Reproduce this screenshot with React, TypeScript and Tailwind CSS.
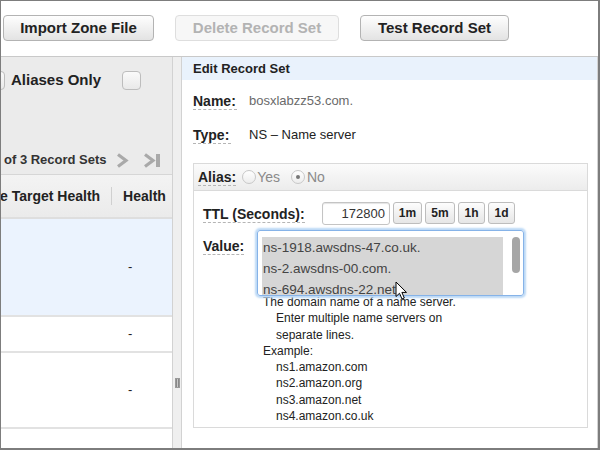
import React from 'react';

const Label = ({ children, className = '' }: { children: React.ReactNode; className?: string }) => (
  <span
    className={`border-b border-dashed border-[#b5b5b5] text-[14px] leading-[16px] font-bold text-[#222] ${className}`}
  >
    {children}
  </span>
);

const ToolButton = ({ label, width, disabled }: { label: string; width: string; disabled?: boolean }) => (
  <button
    className={`h-[26px] ${width} rounded-[4px] border text-[15px] font-bold ${
      disabled
        ? 'border-[#dedede] bg-[#f7f7f7] text-[#b3b3b3]'
        : 'border-[#b3b3b3] bg-linear-to-b from-[#fefefe] to-[#e3e3e3] text-[#222]'
    }`}
  >
    {label}
  </button>
);

const SmallButton = ({ label, width }: { label: string; width: string }) => (
  <button
    className={`h-[22px] ${width} rounded-[3px] border border-[#bdbdbd] bg-linear-to-b from-[#fdfdfd] to-[#e6e6e6] text-[12px] font-bold text-[#222]`}
  >
    {label}
  </button>
);

const Radio = ({ checked }: { checked?: boolean }) => (
  <span className="flex h-[14px] w-[14px] items-center justify-center rounded-full border border-[#c8c8c8] bg-linear-to-b from-[#ffffff] to-[#ededed]">
    {checked && <span className="h-[4px] w-[4px] rounded-full bg-[#777]" />}
  </span>
);

const Checkbox = ({ className = '' }: { className?: string }) => (
  <span
    className={`block h-[19px] w-[19px] rounded-[4px] border border-[#bdbdbd] bg-linear-to-b from-[#fafafa] to-[#e9e9e9] ${className}`}
  />
);

export default function App() {
  const examples = ['ns1.amazon.com', 'ns2.amazon.org', 'ns3.amazon.net', 'ns4.amazon.co.uk'];
  const values = ['ns-1918.awsdns-47.co.uk.', 'ns-2.awsdns-00.com.', 'ns-694.awsdns-22.net'];

  return (
    <div className="flex h-[450px] w-[600px] flex-col overflow-hidden border-t border-l border-r-2 border-b-2 border-[#7d7d7d] bg-white font-['Liberation_Sans',Arial,sans-serif]">
      {/* toolbar */}
      <div className="flex h-[56px] shrink-0 gap-[21px] border-b border-[#c9c9c9] pt-[14px] pl-[2px]">
        <ToolButton label="Import Zone File" width="w-[151px]" />
        <ToolButton label="Delete Record Set" width="w-[164px]" disabled />
        <ToolButton label="Test Record Set" width="w-[149px]" />
      </div>

      <div className="flex min-h-0 flex-1">
        {/* left list panel */}
        <div className="flex w-[171px] shrink-0 flex-col overflow-hidden">
          <div className="h-[118px] shrink-0 border-b border-[#d6d6d6] bg-[#ebebeb]">
            <div className="mt-[14px] flex h-[19px] items-center">
              <Checkbox className="ml-[-15px]" />
              <span className="ml-[6px] text-[15px] font-bold text-[#222]">Aliases Only</span>
              <Checkbox className="ml-[21px]" />
            </div>
            <div className="mt-[60px] flex h-[20px] items-center">
              <span className="ml-[3px] text-[13px] font-bold whitespace-nowrap text-[#333]">of 3 Record Sets</span>
              <svg className="ml-[9px]" width="13" height="15" viewBox="0 0 13 15">
                <path d="M2 1.5 L10 7.5 L2 13.5" fill="none" stroke="#a9a9a9" strokeWidth="3.2" />
              </svg>
              <svg className="ml-[14px]" width="18" height="15" viewBox="0 0 18 15">
                <path d="M2 1.5 L10 7.5 L2 13.5" fill="none" stroke="#a9a9a9" strokeWidth="3.2" />
                <rect x="13" y="1" width="4" height="13" fill="#a9a9a9" />
              </svg>
            </div>
          </div>
          <div className="flex h-[44px] shrink-0 items-center border-b-2 border-[#dedede] bg-linear-to-b from-[#f3f3f3] to-[#ebebeb] text-[14px] font-bold text-[#222]">
            <span className="ml-[-1px] whitespace-nowrap">e Target Health</span>
            <span className="ml-[11px] h-[18px] w-px bg-[#d0d0d0]" />
            <span className="ml-[11px] whitespace-nowrap">Health</span>
          </div>
          <div className="flex h-[98px] shrink-0 items-center border-b-2 border-[#e2e2e2] bg-[#ebf3fe] pl-[127px] text-[13px] text-[#222]">
            -
          </div>
          <div className="flex h-[36px] shrink-0 items-center border-b-2 border-[#e2e2e2] pl-[127px] text-[13px] text-[#222]">
            -
          </div>
          <div className="flex h-[76px] shrink-0 items-center border-b-2 border-[#e2e2e2] pl-[127px] text-[13px] text-[#222]">
            -
          </div>
          <div className="flex-1" />
        </div>

        {/* splitter */}
        <div className="flex w-[10px] shrink-0 flex-col items-center border-x border-[#d2d2d2] bg-[#efefef] pt-[321px]">
          <div className="flex h-[10px] w-[5px] gap-px border border-[#9a9a9a] bg-[#c8c8c8]">
            <span className="w-px bg-[#888]" />
            <span className="w-px bg-[#888]" />
          </div>
        </div>

        {/* right edit panel */}
        <div className="flex min-w-0 flex-1 flex-col border-r border-[#d4d4d4]">
          <div className="flex h-[23px] shrink-0 items-center bg-[#e9f2fc] pl-[11px] text-[13px] font-bold text-[#222]">
            Edit Record Set
          </div>
          <div className="mt-[10px] flex h-[22px] items-center pl-[11px]">
            <Label className="w-[44px]">Name:</Label>
            <span className="ml-[12px] text-[13px] text-[#6a6a6a]">bosxlabzz53.com.</span>
          </div>
          <div className="mt-[12px] flex h-[22px] items-center pl-[11px]">
            <Label className="w-[38px]">Type:</Label>
            <span className="ml-[18px] text-[13px] text-[#222]">NS – Name server</span>
          </div>

          <div className="mt-[17px] ml-[11px] w-[395px] border border-[#dadada]">
            <div className="flex h-[27px] items-center border-b border-[#dadada] bg-linear-to-b from-[#fbfbfb] to-[#ececec] pl-[4px] text-[14px]">
              <Label>Alias:</Label>
              <span className="ml-[6px]">
                <Radio />
              </span>
              <span className="ml-[1px] text-[#8a8a8a]">Yes</span>
              <span className="ml-[11px]">
                <Radio checked />
              </span>
              <span className="ml-[2px] text-[#8a8a8a]">No</span>
            </div>

            <div className="pt-[10px] pb-[3px] pl-[9px]">
              <div className="flex h-[25px] items-center">
                <span className="w-[119px]">
                  <Label>TTL (Seconds):</Label>
                </span>
                <div className="flex h-[23px] w-[68px] items-center justify-end rounded-[3px] border border-[#c4c4c4] pr-[4px] text-[13px] text-[#333] shadow-[inset_0_1px_1px_#e4e4e4]">
                  172800
                </div>
                <div className="mb-[2px] ml-[3px] flex gap-[3px]">
                  <SmallButton label="1m" width="w-[29px]" />
                  <SmallButton label="5m" width="w-[30px]" />
                  <SmallButton label="1h" width="w-[27px]" />
                  <SmallButton label="1d" width="w-[27px]" />
                </div>
              </div>

              <div className="mt-[4px] flex">
                <span className="w-[54px] pt-[4px]">
                  <Label>Value:</Label>
                </span>
                <div className="relative h-[66px] w-[267px] rounded-[3px] border border-[#86b3e8] shadow-[0_0_2px_2px_#bcd9f6]">
                  <div className="flex h-full overflow-hidden pt-[6px] pl-[4px]">
                    <div className="h-[64px] w-[241px] shrink-0 bg-[#d6d6d6] text-[13.5px] leading-[21px] whitespace-nowrap text-[#444]">
                      {values.map((v) => (
                        <div key={v} className="pl-[1px]">
                          {v}
                        </div>
                      ))}
                    </div>
                    <div className="flex flex-1 justify-center pl-[6px]">
                      <span className="h-[36px] w-[8px] rounded-full bg-[#a6a6a6]" />
                    </div>
                  </div>
                  <svg className="absolute top-[50px] left-[137px]" width="13" height="19" viewBox="0 0 13 19">
                    <path
                      d="M1 1 L1 15.5 L4.5 12.3 L7 18 L9.3 17 L6.9 11.4 L11.5 11.4 Z"
                      fill="#fff"
                      stroke="#000"
                      strokeWidth="1"
                      strokeLinejoin="round"
                    />
                  </svg>
                </div>
              </div>

              <div className="mt-[-2px] ml-[60px] text-[12px] leading-[16.3px] text-[#222]">
                <div>The domain name of a name server.</div>
                <div className="pl-[13px]">Enter multiple name servers on</div>
                <div className="pl-[13px]">separate lines.</div>
                <div>Example:</div>
                {examples.map((e) => (
                  <div key={e} className="pl-[13px]">
                    {e}
                  </div>
                ))}
              </div>
            </div>
          </div>
        </div>
      </div>
    </div>
  );
}
